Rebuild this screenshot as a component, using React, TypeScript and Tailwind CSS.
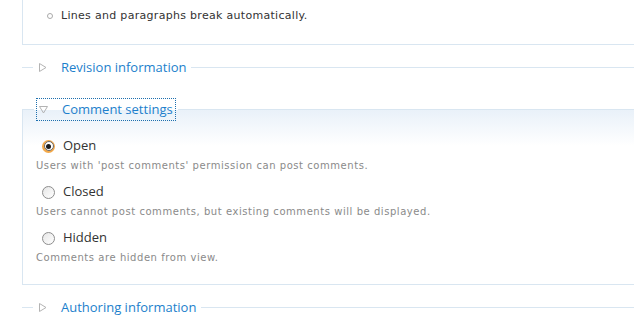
const legendFont = { fontFamily: '"Open Sans", "DejaVu Sans", sans-serif' }

function Triangle({ open }: { open?: boolean }) {
  return (
    <svg width="9" height="9" viewBox="0 0 9 9" className="shrink-0">
      {open ? (
        <path d="M0.5 1.5 H8.5 L4.5 8 Z" fill="none" stroke="#b3b3b3" strokeWidth="1" />
      ) : (
        <path d="M1.5 0.5 V8.5 L8 4.5 Z" fill="none" stroke="#b3b3b3" strokeWidth="1" />
      )}
    </svg>
  )
}

function Collapsed({ title }: { title: string }) {
  return (
    <fieldset className="border-t border-[#d9e6f1] min-w-0">
      <legend className="ml-[11px] px-[3px]">
        <span
          className="flex items-center h-[21px] pl-[2px] pr-[2px] text-[13px] text-[#1d7fcc]"
          style={legendFont}
        >
          <Triangle />
          <span className="ml-[14px]">{title}</span>
        </span>
      </legend>
    </fieldset>
  )
}

function Radio({ checked }: { checked?: boolean }) {
  if (checked) {
    return (
      <span className="w-[13px] h-[13px] rounded-full bg-[#f3a94a] flex items-center justify-center shrink-0">
        <span className="w-[10px] h-[10px] rounded-full bg-white border border-[#6b6b6b] flex items-center justify-center">
          <span className="w-[5px] h-[5px] rounded-full bg-[#1c1c1c]" />
        </span>
      </span>
    )
  }
  return (
    <span className="w-[13px] h-[13px] rounded-full border border-[#8d8d8d] bg-gradient-to-br from-[#e6e6e6] to-white shrink-0" />
  )
}

const options = [
  { label: 'Open', desc: "Users with 'post comments' permission can post comments.", checked: true },
  { label: 'Closed', desc: 'Users cannot post comments, but existing comments will be displayed.' },
  { label: 'Hidden', desc: 'Comments are hidden from view.' },
]

export default function App() {
  return (
    <div
      className="w-[634px] h-[330px] overflow-hidden bg-white pl-[22px]"
      style={{ fontFamily: '"DejaVu Sans", Verdana, sans-serif' }}
    >
      {/* filter tips, mostly scrolled away */}
      <div className="border-l border-b border-[#d9e6f1] h-[45px] pt-[8px] pl-[24px]">
        <div className="flex items-center text-[11px] text-[#333] tracking-[0.3px]">
          <span className="w-[6px] h-[6px] rounded-full border border-[#aaa] mr-[8px]" />
          Lines and paragraphs break automatically.
        </div>
      </div>

      <div className="mt-[12px]">
        <Collapsed title="Revision information" />
      </div>

      <fieldset className="mt-[21px] border-t border-l border-b border-[#d9e6f1] bg-[linear-gradient(to_bottom,#e9f1f9,#ffffff_36px)] pb-[19px] min-w-0">
        <legend className="ml-[11px] px-[3px]">
          <span
            className="flex items-center h-[21px] pl-[2px] pr-[2px] text-[13px] text-[#1d7fcc] outline outline-1 outline-dotted outline-[#1d6fae]"
            style={legendFont}
          >
            <Triangle open />
            <span className="ml-[14px]">Comment settings</span>
          </span>
        </legend>
        <div className="pl-[13px] pt-[18px] flex flex-col gap-[11px]">
          {options.map((o) => (
            <div key={o.label}>
              <div className="flex items-center pl-[6px] h-[16px]">
                <Radio checked={o.checked} />
                <span className="ml-[8px] text-[13px] text-[#333]" style={legendFont}>
                  {o.label}
                </span>
              </div>
              <div className="mt-[4px] text-[10px] text-[#8a8a8a] tracking-[0.55px]">{o.desc}</div>
            </div>
          ))}
        </div>
      </fieldset>

      <div className="mt-[12px]">
        <Collapsed title="Authoring information" />
      </div>
    </div>
  )
}
